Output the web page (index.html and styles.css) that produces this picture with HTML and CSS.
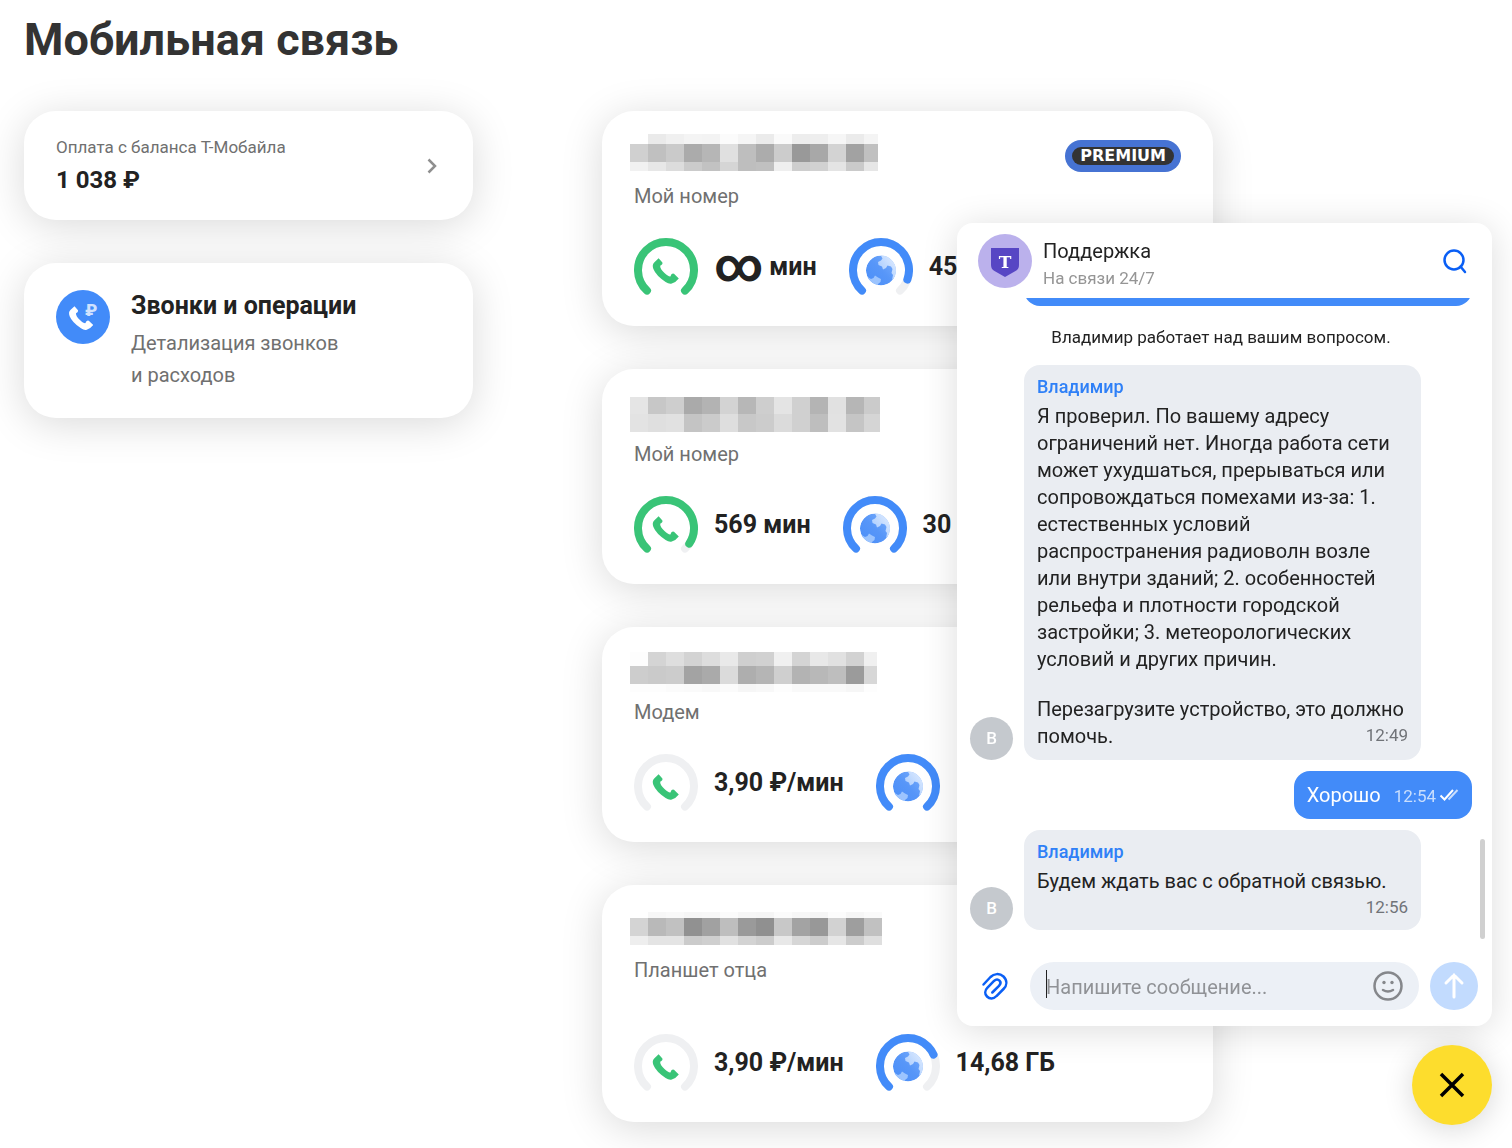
FILE: index.html
```html
<!DOCTYPE html>
<html lang="ru">
<head>
    <meta charset="UTF-8">
    <meta name="viewport" content="width=device-width, initial-scale=1">
    <title>Мобильная связь</title>
    <link rel="stylesheet" href="styles.css">
</head>

<body>

<svg class="sprite" aria-hidden="true">
    <defs>
        <linearGradient id="sea" x1="1" y1="0" x2="0" y2="1">
            <stop offset="0" stop-color="#7db0fc"/>
            <stop offset="0.5" stop-color="#5796f8"/>
            <stop offset="1" stop-color="#4a8ef9"/>
        </linearGradient>
        <linearGradient id="land" x1="1" y1="0" x2="0" y2="1">
            <stop offset="0" stop-color="#e6f0ff"/>
            <stop offset="1" stop-color="#9cc4fe"/>
        </linearGradient>
        <clipPath id="globe-clip"><circle cx="32" cy="32.500" r="15"/></clipPath>
    </defs>
    <symbol id="arc" viewBox="0 0 64 58">
        <path pathLength="100" d="M13 52.6A28 28 0 1 1 51 52.6"/>
    </symbol>
    <symbol id="phone" viewBox="0 0 64 58">
        <path d="M24.6 20.2L28.4 24.6Q29 26.600 26.200 27.800Q26 31 30.500 35Q34.500 38.800 36.400 38.400Q37.400 34.800 40 35.800L44.800 40.400Q42 44 37.800 45.600Q35 46.400 31.600 44Q22 37.500 19.400 31Q17.800 26.600 20.200 24.400Z"/>
    </symbol>
    <symbol id="globe" viewBox="0 0 64 58">
        <g clip-path="url(#globe-clip)">
            <circle cx="32" cy="32.500" r="15" fill="url(#sea)"/>
            <path fill="url(#land)" d="M31 16L33.500 20.500L32 22.500L29 24L29.500 27L33 28.500L34 31.500L37 30L38.500 27.500L42 28.500L43.500 31L42.500 35L44 37L43 42L48 38V16Z"/>
            <path fill="#9cc4fe" d="M17 38L22 41L24.500 40L26 37.500L29 39.500L32 41L31.500 44L29 46L29.500 49H17Z"/>
        </g>
    </symbol>
</svg>

<main class="page">
    <h1>Мобильная связь</h1>

    <div class="columns">
        <div class="column">
            <a class="card balance" href="#">
                <span>
                    <span class="balance_label">Оплата с баланса Т-Мобайла</span>
                    <span class="balance_sum">1 038 ₽</span>
                </span>
                <svg class="chevron" viewBox="0 0 10 16"><path d="M1.500 1.500L8 8L1.500 14.500"/></svg>
            </a>
            <a class="card operations" href="#">
                <svg class="operations_icon" viewBox="0 0 54 54">
                    <circle cx="27" cy="27" r="27" fill="#428bf9"/>
                    <text x="29" y="26">₽</text>
                    <g transform="translate(-4.400 -2.600) scale(.93)"><use href="#phone" width="64" height="58" fill="#fff"/></g>
                </svg>
                <span>
                    <span class="operations_title">Звонки и операции</span>
                    <span class="operations_text">Детализация звонков<br>и расходов</span>
                </span>
            </a>
        </div>

        <div class="column">
            <section class="card line">
                <div class="line_head">
                    <svg class="number" data-number="0"></svg>
                    <span class="premium"><span>PREMIUM</span></span>
                </div>
                <p class="line_name">Мой номер</p>
                <div class="rests">
                    <div class="rest">
                        <svg class="gauge green" viewBox="0 0 64 58"><use class="track" href="#arc"/><use class="progress" href="#arc" style="stroke-dasharray: 100 200"/><use class="pict" href="#phone"/></svg>
                        <b><span class="infinity">∞</span>мин</b>
                    </div>
                    <div class="rest">
                        <svg class="gauge blue" viewBox="0 0 64 58"><use class="track" href="#arc"/><use class="progress" href="#arc" style="stroke-dasharray: 90 200"/><use href="#globe"/></svg>
                        <b>45 ГБ</b>
                    </div>
                </div>
            </section>

            <section class="card line">
                <div class="line_head">
                    <svg class="number" data-number="1"></svg>
                </div>
                <p class="line_name">Мой номер</p>
                <div class="rests">
                    <div class="rest">
                        <svg class="gauge green" viewBox="0 0 64 58"><use class="track" href="#arc"/><use class="progress" href="#arc" style="stroke-dasharray: 95 200"/><use class="pict" href="#phone"/></svg>
                        <b>569 мин</b>
                    </div>
                    <div class="rest">
                        <svg class="gauge blue" viewBox="0 0 64 58"><use class="track" href="#arc"/><use class="progress" href="#arc" style="stroke-dasharray: 100 200"/><use href="#globe"/></svg>
                        <b>30 ГБ</b>
                    </div>
                </div>
            </section>

            <section class="card line">
                <div class="line_head">
                    <svg class="number" data-number="2"></svg>
                </div>
                <p class="line_name">Модем</p>
                <div class="rests">
                    <div class="rest">
                        <svg class="gauge green" viewBox="0 0 64 58"><use class="track" href="#arc"/><use class="pict" href="#phone"/></svg>
                        <b>3,90 ₽/мин</b>
                    </div>
                    <div class="rest">
                        <svg class="gauge blue" viewBox="0 0 64 58"><use class="track" href="#arc"/><use class="progress" href="#arc" style="stroke-dasharray: 100 200"/><use href="#globe"/></svg>
                    </div>
                </div>
            </section>

            <section class="card line line_tall">
                <div class="line_head">
                    <svg class="number" data-number="3"></svg>
                </div>
                <p class="line_name">Планшет отца</p>
                <div class="rests">
                    <div class="rest">
                        <svg class="gauge green" viewBox="0 0 64 58"><use class="track" href="#arc"/><use class="pict" href="#phone"/></svg>
                        <b>3,90 ₽/мин</b>
                    </div>
                    <div class="rest">
                        <svg class="gauge blue" viewBox="0 0 64 58"><use class="track" href="#arc"/><use class="progress" href="#arc" style="stroke-dasharray: 74 200"/><use href="#globe"/></svg>
                        <b>14,68 ГБ</b>
                    </div>
                </div>
            </section>
        </div>
    </div>
</main>

<aside class="chat">
    <header class="chat_header">
        <svg class="chat_logo" viewBox="0 0 54 54">
            <circle cx="27" cy="27" r="27" fill="#bbb1ec"/>
            <path fill="#5746c4" d="M13 14H41V31Q41 35 37.500 37L27 43L16.500 37Q13 35 13 31Z"/>
            <text x="27" y="34" text-anchor="middle">T</text>
        </svg>
        <div class="chat_who">
            <div class="chat_title">Поддержка</div>
            <div class="chat_status">На связи 24/7</div>
        </div>
        <button type="button" class="icon_button search" aria-label="Поиск">
            <svg width="28" height="28" viewBox="0 0 28 28"><circle cx="13" cy="13" r="9.500"/><path d="M19.500 19.500L24 25"/></svg>
        </button>
    </header>

    <div class="feed">
        <div class="previous"></div>
        <p class="notice">Владимир работает над вашим вопросом.</p>
        <div class="message">
            <span class="avatar">В</span>
            <div class="bubble">
                <div class="author">Владимир</div>
                <p>Я проверил. По вашему адресу ограничений нет. Иногда работа сети может ухудшаться, прерываться или сопровождаться помехами из-за: 1. естественных условий распространения радиоволн возле или&nbsp;внутри зданий; 2. особенностей рельефа и плотности городской застройки; 3. метеорологических условий и других причин.</p>
                <p>Перезагрузите устройство, это должно помочь. <time>12:49</time></p>
            </div>
        </div>
        <div class="message own">
            <div class="bubble">
                <p>Хорошо</p>
                <time>12:54</time>
                <svg width="20" height="14" viewBox="0 0 20 14"><path d="M1.500 7.500L5.500 11.500L14 2"/><path class="second" d="M9.500 11.500L18.500 2"/></svg>
            </div>
        </div>
        <div class="message">
            <span class="avatar">В</span>
            <div class="bubble">
                <div class="author">Владимир</div>
                <p>Будем ждать вас с обратной связью. <time>12:56</time></p>
            </div>
        </div>
        <div class="scrollbar"></div>
    </div>

    <form class="compose" onsubmit="return false">
        <button type="button" class="icon_button" aria-label="Прикрепить файл">
            <svg width="28" height="28" viewBox="0 0 28 28"><path d="M2.500 12.500L9.500 5C13 1.500 18.500 1 22.500 4.500C26.500 8.500 26 13.500 22.500 17L15.500 24C12.500 27.300 8.500 27 6 24.500C3.500 22 3.700 18.500 6.500 15.700L13 9C15 7.200 17.300 7.500 18.500 8.700C20 10.200 19.600 12.200 18 13.800L11.300 20.500"/></svg>
        </button>
        <div class="field">
            <input type="text" placeholder="Напишите сообщение..." aria-label="Сообщение">
            <button type="button" class="smile" aria-label="Эмодзи">
                <svg width="30" height="30" viewBox="0 0 30 30"><circle cx="15" cy="15" r="13.500"/><path d="M10 19Q15 22 20 19"/><circle class="eye" cx="11" cy="11.500" r="1.700"/><circle class="eye" cx="19" cy="11.500" r="1.700"/></svg>
            </button>
        </div>
        <button type="submit" class="send" aria-label="Отправить">
            <svg width="24" height="28" viewBox="0 0 24 28"><path d="M12 25V3M4 11L12 3L20 11"/></svg>
        </button>
    </form>
</aside>

<button type="button" class="close" aria-label="Закрыть чат">
    <svg width="28" height="28" viewBox="0 0 28 28"><path d="M3 3L25 25M25 3L3 25"/></svg>
</button>

<script src="script.js"></script>
</body>

</html>
```

FILE: styles.css
```css
* {
    box-sizing: border-box;
}

body {
    margin: 0;
    background: white;
    color: #222;
    font: 20px/24px Roboto, "Liberation Sans", sans-serif;
    overflow: hidden;
}

h1, p {
    margin: 0;
}

a {
    color: inherit;
    text-decoration: none;
}

button {
    padding: 0;
    border: none;
    background: none;
    cursor: pointer;
}

svg {
    display: block;
    flex: none;
}

.sprite {
    position: absolute;
    width: 0;
    height: 0;
}

/* страница */
.page {
    max-width: 1237px;
    padding: 14px 24px 43px;
}

h1 {
    margin-bottom: 45px;
    color: #333;
    font-size: 45px;
    line-height: 52px;
}

.columns {
    display: grid;
    grid-template-columns: 449fr 611fr;
    column-gap: 129px;
}

.column {
    display: flex;
    flex-direction: column;
    gap: 43px;
}

.card {
    border-radius: 32px;
    background: white;
    box-shadow: 0 6px 42px rgba(0, 0, 0, 0.15);
}

.balance {
    display: flex;
    align-items: center;
    justify-content: space-between;
    padding: 24px 36px 24px 32px;
}

.balance_label {
    display: block;
    color: #707070;
    font-size: 17px;
}

.balance_sum {
    display: block;
    margin-top: 5px;
    font-size: 24px;
    font-weight: bold;
    line-height: 32px;
}

.chevron {
    width: 10px;
    height: 16px;
    fill: none;
    stroke: #8f8f8f;
    stroke-width: 2.5;
}

.operations {
    display: flex;
    gap: 21px;
    padding: 27px 32px;
}

.operations_icon {
    width: 54px;
    height: 54px;
}

.operations_icon text {
    fill: #d0e2fe;
    font-size: 17px;
    font-weight: 900;
}

.operations_title {
    display: block;
    margin-bottom: 5px;
    font-size: 25px;
    font-weight: bold;
    line-height: 32px;
}

.operations_text {
    display: block;
    color: #707070;
    line-height: 32px;
}

/* карточки номеров */
.line {
    padding: 20px 32px 30px;
}

.line_head {
    display: flex;
    justify-content: space-between;
    align-items: flex-start;
    margin-left: -4px;
}

.number {
    width: 252px;
    height: 46px;
}

.premium {
    margin-top: 9px;
    padding: 7px;
    border-radius: 16px;
    background: #4673d3;
}

.premium span {
    display: block;
    padding: 0 8px;
    border-radius: 9px;
    background: #333;
    color: white;
    font: bold 16px/18px "DejaVu Sans", sans-serif;
}

.line_name {
    margin-top: 7px;
    color: #707070;
}

.rests {
    display: flex;
    gap: 32px;
    margin-top: 30px;
}

.line_tall .rests {
    margin-top: 52px;
}

.rest {
    display: flex;
    gap: 16px;
}

.rest b {
    display: flex;
    height: 58px;
    font-size: 25px;
    line-height: 58px;
    white-space: nowrap;
}

.infinity {
    margin-right: 6px;
    font-size: 47px;
    line-height: 54px;
}

.gauge {
    width: 64px;
    height: 58px;
}

.track, .progress {
    fill: none;
    stroke-width: 8;
    stroke-linecap: round;
}

.track {
    stroke: #eff0f2;
}

.green .progress {
    stroke: #39c477;
}

.green .pict {
    fill: #39c477;
}

.blue .progress {
    stroke: #428bf9;
}

/* чат */
.chat {
    position: fixed;
    right: 20px;
    bottom: 122px;
    display: flex;
    flex-direction: column;
    width: 535px;
    height: calc(100vh - 345px);
    border-radius: 16px;
    background: white;
    box-shadow: 0 4px 36px rgba(0, 0, 0, 0.14);
}

.chat_header {
    display: flex;
    align-items: flex-start;
    gap: 11px;
    padding: 11px 23px 6px 21px;
}

.chat_logo {
    width: 54px;
    height: 54px;
}

.chat_logo text {
    fill: white;
    font: bold 17px "DejaVu Serif", serif;
}

.chat_who {
    flex: 1;
    padding-top: 4px;
    line-height: 27px;
}

.chat_status {
    color: #959595;
    font-size: 17px;
}

.search {
    margin-top: 13px;
}

.icon_button svg {
    fill: none;
    stroke: #0a5ff5;
    stroke-width: 2.5;
    stroke-linecap: round;
}

.feed {
    position: relative;
    display: flex;
    flex: 1;
    flex-direction: column;
    justify-content: flex-end;
    min-height: 0;
    padding: 0 20px 32px 13px;
    overflow: hidden;
}

.previous {
    flex: none;
    height: 48px;
    margin-left: 54px;
    border-radius: 16px;
    background: #428bf9;
}

.notice {
    margin: 19px 0 16px;
    font-size: 17px;
    text-align: center;
}

.message {
    display: flex;
    align-items: flex-end;
    gap: 11px;
}

.message + .message {
    margin-top: 11px;
}

.avatar {
    flex: none;
    width: 43px;
    border-radius: 50%;
    background: #c5c9ce;
    color: white;
    font-size: 17px;
    font-weight: 500;
    line-height: 43px;
    text-align: center;
}

.bubble {
    display: flow-root;
    width: 397px;
    padding: 10px 13px;
    border-radius: 16px;
    background: #eaedf2;
    line-height: 27px;
}

.bubble p + p {
    margin-top: 23px;
}

.author {
    margin-bottom: 4px;
    color: #2f80f7;
    font-size: 18px;
    font-weight: 500;
    line-height: 24px;
}

.bubble time {
    float: right;
    color: #707378;
    font-size: 17px;
    line-height: 25px;
}

.own {
    justify-content: flex-end;
}

.own .bubble {
    display: flex;
    align-items: center;
    width: auto;
    background: #428bf9;
    color: white;
    line-height: 28px;
}

.own time {
    margin: 2px 3px 0 13px;
    color: #c9defd;
}

.own svg {
    fill: none;
    stroke: white;
    stroke-width: 2;
}

.own .second {
    stroke: #c9defd;
}

.scrollbar {
    position: absolute;
    right: 7px;
    bottom: 23px;
    width: 5px;
    height: 100px;
    border-radius: 3px;
    background: #d0d0d0;
}

.compose {
    display: flex;
    align-items: center;
    gap: 11px;
    padding: 0 14px 16px 24px;
}

.field {
    position: relative;
    display: flex;
    flex: 1;
    align-items: center;
    height: 48px;
    margin-left: 10px;
    padding: 0 16px;
    border-radius: 24px;
    background: #ecf0f6;
}

/* курсор в поле ввода */
.field::before {
    position: absolute;
    left: 16px;
    width: 1px;
    height: 28px;
    margin-bottom: 4px;
    background: #222;
    content: "";
}

.field input {
    flex: 1;
    min-width: 0;
    padding: 2px 0 0;
    border: none;
    outline: none;
    background: none;
    font: inherit;
}

.field input::placeholder {
    color: #909296;
}

.smile svg {
    fill: none;
    stroke: #85878b;
    stroke-width: 2.5;
    stroke-linecap: round;
}

.smile .eye {
    fill: #85878b;
    stroke: none;
}

.send {
    display: grid;
    place-items: center;
    width: 48px;
    height: 48px;
    border-radius: 50%;
    background: #c2dbfe;
}

.send svg {
    fill: none;
    stroke: white;
    stroke-width: 3;
    stroke-linecap: round;
}

.close {
    position: fixed;
    right: 20px;
    bottom: 23px;
    display: grid;
    place-items: center;
    width: 80px;
    height: 80px;
    border-radius: 50%;
    background: #fddd2d;
    box-shadow: 0 4px 30px rgba(0, 0, 0, 0.16);
}

.close svg {
    fill: none;
    stroke: black;
    stroke-width: 3.5;
}
```

FILE: script.js
```
// скрытые номера: [y, высота, яркость клеток]
const numbers = [
    {width: 248, rows: [
        [3, 10, [255, 234, 240, 244, 243, 251, 245, 235, 250, 237, 238, 246, 235, 244]],
        [13, 18, [208, 192, 202, 171, 182, 224, 190, 172, 204, 153, 168, 211, 162, 192]],
        [31, 9, [241, 231, 220, 203, 194, 213, 190, 192, 239, 206, 209, 228, 202, 230]]
    ]},
    {width: 250, rows: [
        [8, 17, [229, 199, 206, 170, 179, 211, 183, 206, 228, 208, 180, 225, 182, 203]],
        [25, 18, [227, 223, 225, 196, 203, 222, 200, 204, 219, 208, 190, 226, 197, 213]]
    ]},
    {width: 247, rows: [
        [5, 14, [253, 212, 222, 211, 221, 233, 207, 209, 240, 212, 232, 225, 210, 240]],
        [19, 18, [205, 202, 204, 163, 170, 219, 174, 181, 207, 179, 184, 190, 155, 215]],
        [37, 8, [253, 253, 251, 250, 248, 251, 246, 248, 253, 249, 249, 249, 246, 253]]
    ]},
    {width: 252, rows: [
        [7, 6, [255, 247, 249, 246, 247, 251, 246, 245, 251, 247, 245, 252, 246, 250]],
        [13, 18, [212, 185, 193, 145, 161, 190, 154, 144, 200, 163, 152, 210, 158, 193]],
        [31, 9, [238, 228, 228, 203, 207, 225, 211, 204, 232, 214, 204, 230, 204, 223]]
    ]}
];

for (const svg of document.querySelectorAll(".number")) {
    const number = numbers[svg.dataset.number];
    let cells = "";
    for (const [y, height, row] of number.rows) {
        row.forEach((level, i) => {
            const width = Math.min(18, number.width - i * 18);
            cells += `<rect x="${i * 18}" y="${y}" width="${width}" height="${height}" fill="rgb(${level},${level},${level})"/>`;
        });
    }
    svg.innerHTML = cells;
}
```
